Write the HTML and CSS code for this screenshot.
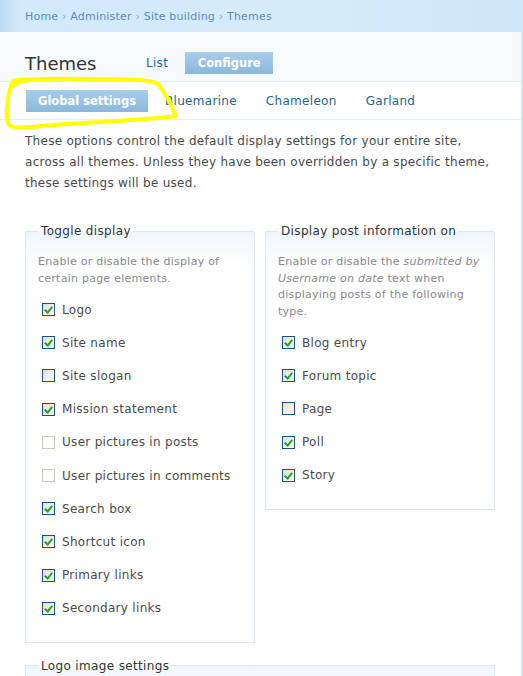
FILE: index.html
```html
<!DOCTYPE html>
<html>
<head>
<meta charset="utf-8">
<link rel="stylesheet" href="styles.css">
</head>
<body>
<div class="page">
  <div class="breadcrumb"><a href="#">Home</a> › <a href="#">Administer</a> › <a href="#">Site building</a> › <a href="#">Themes</a></div>
  <div class="title-row">
    <h2 class="title">Themes</h2>
    <ul class="tabs">
      <li><a href="#" class="tab">List</a></li>
      <li><a href="#" class="tab active">Configure</a></li>
    </ul>
  </div>
  <div class="subtabs-row">
    <ul class="subtabs">
      <li><a href="#" class="subtab active">Global settings</a></li>
      <li><a href="#" class="subtab">Bluemarine</a></li>
      <li><a href="#" class="subtab">Chameleon</a></li>
      <li><a href="#" class="subtab">Garland</a></li>
    </ul>
  </div>
  <svg class="highlight" width="200" height="140" viewBox="0 0 200 140">
    <path d="M 14 86 C 14 80 40 78 80 79 C 120 80 148 78 158 84 C 166 94 172 106 176 116 C 150 120 90 122 40 126 C 20 128 8 130 7 120 C 6 108 8 92 13 81 C 25 78 40 80 55 79" fill="none" stroke="#ffff00" stroke-width="4" stroke-linecap="round" stroke-linejoin="round"/>
  </svg>
  <div class="content">
    <p class="intro">These options control the default display settings for your entire site, across all themes. Unless they have been overridden by a specific theme, these settings will be used.</p>
    <div class="columns">
      <fieldset class="box">
        <legend>Toggle display</legend>
        <p class="desc">Enable or disable the display of certain page elements.</p>
        <div class="item"><span class="cb checked"></span>Logo</div>
        <div class="item"><span class="cb checked"></span>Site name</div>
        <div class="item"><span class="cb"></span>Site slogan</div>
        <div class="item"><span class="cb checked"></span>Mission statement</div>
        <div class="item"><span class="cb disabled"></span>User pictures in posts</div>
        <div class="item"><span class="cb disabled"></span>User pictures in comments</div>
        <div class="item"><span class="cb checked"></span>Search box</div>
        <div class="item"><span class="cb checked"></span>Shortcut icon</div>
        <div class="item"><span class="cb checked"></span>Primary links</div>
        <div class="item"><span class="cb checked"></span>Secondary links</div>
      </fieldset>
      <fieldset class="box">
        <legend>Display post information on</legend>
        <p class="desc">Enable or disable the <em>submitted by</em><br><em>Username on date</em> text when displaying posts of the following type.</p>
        <div class="item"><span class="cb checked"></span>Blog entry</div>
        <div class="item"><span class="cb checked"></span>Forum topic</div>
        <div class="item"><span class="cb"></span>Page</div>
        <div class="item"><span class="cb checked"></span>Poll</div>
        <div class="item"><span class="cb checked"></span>Story</div>
      </fieldset>
    </div>
    <fieldset class="box wide">
      <legend>Logo image settings</legend>
      <p class="desc">&nbsp;</p>
    </fieldset>
  </div>
</div>
</body>
</html>
```
FILE: styles.css
```css
html, body {
  margin: 0;
  padding: 0;
  background: #fff;
  overflow: hidden;
}
body {
  font-family: "DejaVu Sans", Verdana, sans-serif;
  color: #494949;
}
a {
  text-decoration: none;
}
.page {
  position: relative;
  width: 521px;
  height: 676px;
  border-right: 2px solid #d3e5f4;
  overflow: hidden;
}
.breadcrumb {
  height: 32px;
  line-height: 34px;
  padding-left: 25px;
  font-size: 11px;
  letter-spacing: 0.2px;
  color: #7fa6c9;
  background: linear-gradient(to right, #bcdaf3 0px, #d2e9fa 18px, #d6ecfb 60%, #cfe6f8 100%);
  margin-right: -2px;
  border-right: 2px solid #3a86c8;
}
.breadcrumb a {
  color: #5b8cbb;
}
.title-row {
  display: flex;
  align-items: center;
  height: 36px;
  padding-top: 13px;
  padding-left: 25px;
  background: #f6fafd;
  border-bottom: 1px solid #e2ecf4;
}
.title {
  margin: 0;
  font-size: 18px;
  font-weight: normal;
  color: #333;
  width: 121px;
  padding-top: 1px;
}
.tabs, .subtabs {
  list-style: none;
  margin: 0;
  padding: 0;
  display: flex;
  align-items: center;
}
.tab {
  display: block;
  font-size: 12px;
  letter-spacing: 0.3px;
  color: #27638c;
  height: 22px;
  line-height: 22px;
  white-space: nowrap;
}
.tabs li:first-child .tab {
  margin-right: 17px;
}
.tab.active, .subtab.active {
  background: linear-gradient(#a9cdea, #8bb7db);
  color: #fff;
  font-weight: bold;
  font-size: 11.5px;
  letter-spacing: 0;
  padding: 0;
}
.tab.active {
  width: 88px;
  text-align: center;
}
.subtabs-row {
  height: 37px;
  display: flex;
  align-items: center;
  padding-left: 26px;
  border-bottom: 1px solid #e6eef5;
  background: #fff;
}
.subtab {
  display: block;
  font-size: 12px;
  letter-spacing: 0.3px;
  color: #27638c;
  height: 22px;
  line-height: 22px;
  white-space: nowrap;
}
.subtab.active {
  width: 122px;
  text-align: center;
  margin-right: 17px;
}
.subtabs li:nth-child(2) .subtab { margin-right: 29px; }
.subtabs li:nth-child(3) .subtab { margin-right: 29px; }
.highlight {
  position: absolute;
  left: 0;
  top: 0;
}
.content {
  padding: 0 0 0 25px;
}
.intro {
  margin: 11px 0 0;
  font-size: 12px;
  letter-spacing: 0.28px;
  line-height: 21px;
  width: 480px;
}
.columns {
  display: grid;
  grid-template-columns: 230px 230px;
  column-gap: 10px;
  align-items: start;
  margin-top: 30px;
}
.box {
  margin: 0;
  border: 1px solid #dbe8f3;
  padding: 16px 12px 17px 12px;
  background: linear-gradient(#eef6fc 0px, #ffffff 34px);
  min-width: 0;
}
.box legend {
  font-size: 12px;
  letter-spacing: 0.35px;
  color: #333;
  padding: 0 2px;
  margin-left: 1px;
}
.desc {
  margin: 0 0 6px;
  font-size: 11px;
  letter-spacing: 0.25px;
  line-height: 16.5px;
  color: #898989;
}
.desc em {
  font-style: italic;
}
.item {
  height: 33.2px;
  display: flex;
  align-items: center;
  font-size: 12px;
  letter-spacing: 0.3px;
  color: #4a4a4a;
  padding-left: 4px;
}
.cb {
  width: 11px;
  height: 11px;
  border: 1px solid #1c5180;
  background: linear-gradient(135deg, #dcdcd7 0%, #f4f4f2 60%, #ffffff 100%);
  margin-right: 7px;
  position: relative;
  flex: none;
}
.cb.checked::after {
  content: "";
  position: absolute;
  left: 3px;
  top: 1px;
  width: 3px;
  height: 6px;
  border-right: 2px solid #21a121;
  border-bottom: 2px solid #21a121;
  transform: rotate(40deg);
}
.cb.disabled {
  border-color: #cac8bb;
  background: #fff;
}
.wide {
  width: 470px;
  box-sizing: border-box;
  margin-top: 16px;
}
```
